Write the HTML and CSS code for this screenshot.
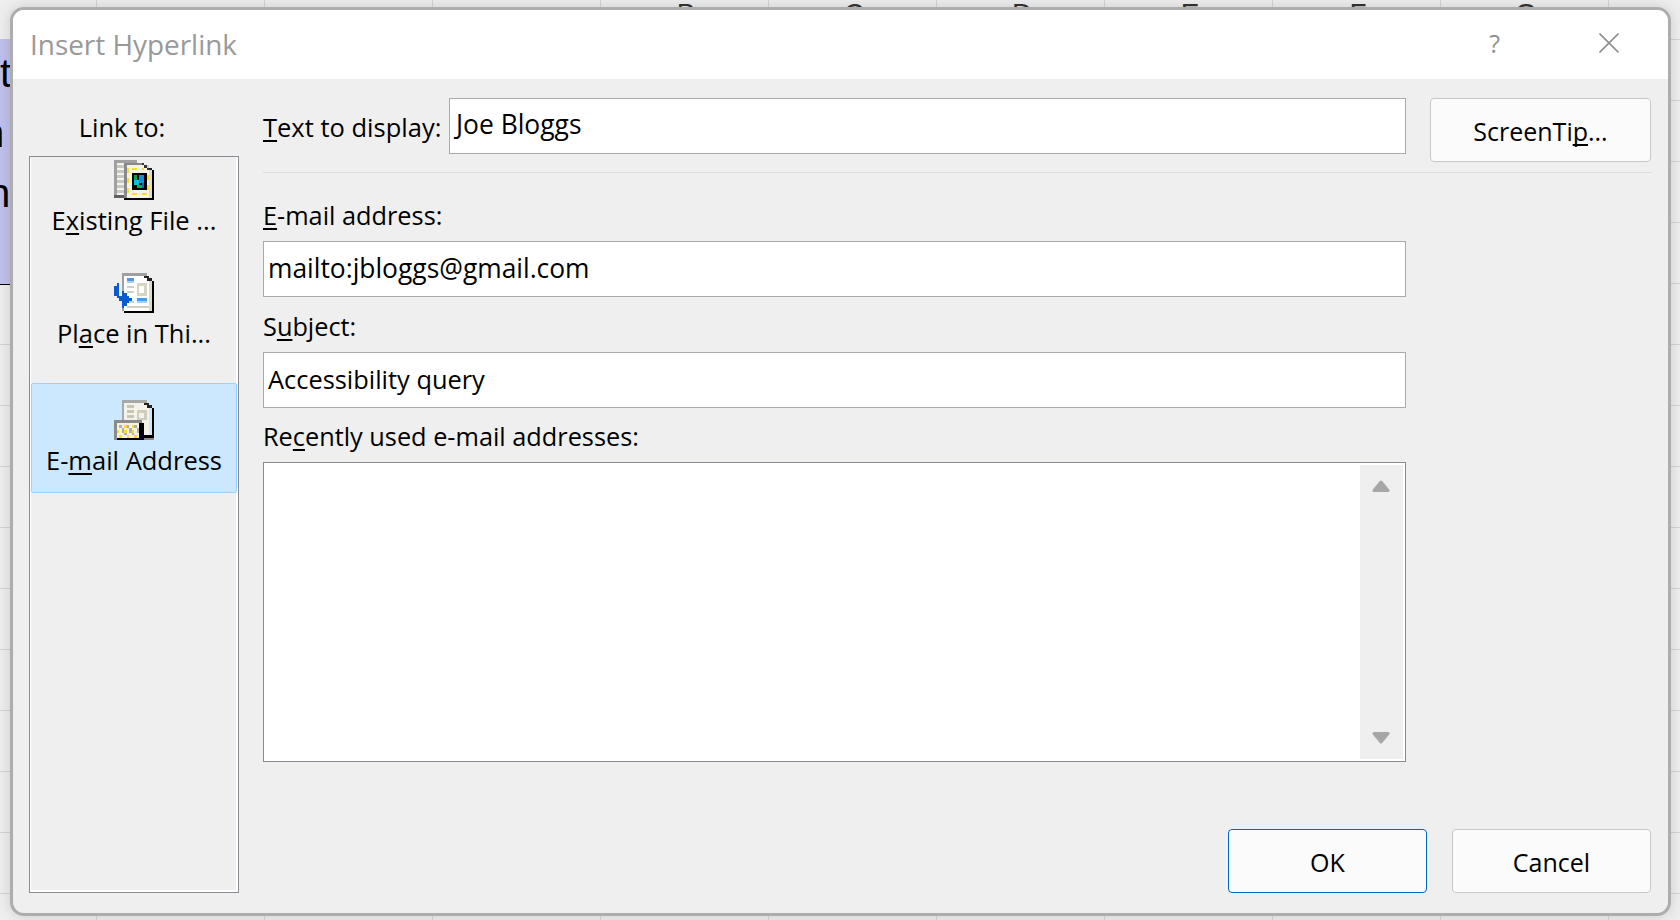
FILE: index.html
```html
<!DOCTYPE html>
<html lang="en">
<head>
<meta charset="utf-8">
<title>Insert Hyperlink</title>
<link rel="stylesheet" href="styles.css">
</head>
<body>
<div class="sheet">
  <div class="col-heads"><span>B</span><span>C</span><span>D</span><span>E</span><span>F</span><span>G</span></div>
  <div class="cell"><div class="cell-t">t</div><div class="cell-n">n</div><div class="cell-he">he</div></div>
</div>
<div class="dialog">
  <header class="titlebar">
    <span class="title">Insert Hyperlink</span>
    <span class="help">?</span>
    <svg class="close" width="20" height="20" viewBox="0 0 20 20"><path d="M0.5 0.5L19.5 19.5M19.5 0.5L0.5 19.5" stroke="#8f8f8f" stroke-width="1.6" fill="none"/></svg>
  </header>
  <div class="content">
    <aside class="side">
      <div class="side-label">Link to:</div>
      <div class="places">
        <div class="place">
          <svg class="picon" viewBox="0 0 16 16" shape-rendering="crispEdges">
            <rect x="0" y="0" width="9" height="15" fill="#a0a0a0"/>
            <rect x="1" y="1" width="7" height="13" fill="#f4f4ee"/>
            <rect x="1" y="2" width="3" height="1" fill="#c8c8c0"/><rect x="1" y="4" width="3" height="1" fill="#c8c8c0"/><rect x="1" y="6" width="3" height="1" fill="#c8c8c0"/><rect x="1" y="8" width="3" height="1" fill="#c8c8c0"/><rect x="1" y="10" width="3" height="1" fill="#c8c8c0"/><rect x="1" y="12" width="3" height="1" fill="#c8c8c0"/>
            <rect x="0" y="14" width="4" height="1" fill="#606060"/>
            <rect x="4" y="1" width="8" height="15" fill="#8a8a8a"/>
            <rect x="5" y="2" width="9" height="13" fill="#f6f3e4"/>
            <rect x="11" y="1" width="1" height="1" fill="#333"/><rect x="12" y="2" width="2" height="1" fill="#d0d0c8"/><rect x="12" y="2" width="1" height="1" fill="#333"/><rect x="13" y="3" width="1" height="1" fill="#333"/><rect x="14" y="3" width="1" height="1" fill="#222"/>
            <rect x="15" y="4" width="1" height="12" fill="#000"/><rect x="4" y="15" width="12" height="1" fill="#000"/><rect x="14" y="4" width="1" height="11" fill="#e0ddc8"/>
            <rect x="5" y="3" width="1" height="2" fill="#ffd92e"/><rect x="5" y="7" width="1" height="2" fill="#ffd92e"/><rect x="5" y="11" width="1" height="2" fill="#ffd92e"/>
            <rect x="7" y="3" width="2" height="1" fill="#ffd92e"/><rect x="11" y="3" width="1" height="1" fill="#ffd92e"/><rect x="7" y="13" width="2" height="1" fill="#ffd92e"/><rect x="11" y="13" width="2" height="1" fill="#ffd92e"/><rect x="13" y="6" width="1" height="2" fill="#ffd92e"/><rect x="13" y="10" width="1" height="2" fill="#ffd92e"/>
            <rect x="7" y="5" width="6" height="7" fill="#000"/>
            <rect x="8" y="6" width="1" height="2" fill="#00a64a"/><rect x="8" y="8" width="2" height="2" fill="#00c8d8"/><rect x="10" y="6" width="2" height="3" fill="#1590e0"/><rect x="9" y="10" width="2" height="1" fill="#00b04a"/><rect x="11" y="9" width="1" height="2" fill="#1068c8"/>
          </svg>
          <span class="place-text">E<u>x</u>isting File ...</span>
        </div>
        <div class="place">
          <svg class="picon" viewBox="0 0 16 16" shape-rendering="crispEdges">
            <rect x="3" y="0" width="10" height="15" fill="#a0a0a0"/>
            <rect x="4" y="1" width="10" height="14" fill="#fff"/>
            <rect x="12" y="1" width="2" height="1" fill="#222"/><rect x="13" y="2" width="2" height="1" fill="#222"/>
            <rect x="15" y="3" width="1" height="13" fill="#000"/><rect x="4" y="15" width="12" height="1" fill="#000"/><rect x="14" y="3" width="1" height="12" fill="#dedbc8"/>
            <rect x="5" y="2" width="3" height="1" fill="#4a9bf0"/><rect x="5" y="3" width="3" height="1" fill="#a8d0f8"/><rect x="5" y="5" width="3" height="1" fill="#d4d0c0"/><rect x="5" y="7" width="3" height="1" fill="#d4d0c0"/><rect x="5" y="11" width="3" height="1" fill="#d4d0c0"/><rect x="5" y="13" width="9" height="1" fill="#d4d0c0"/>
            <rect x="9" y="4" width="4" height="5" fill="#d8d4c4"/><rect x="10" y="5" width="2" height="3" fill="#fff"/>
            <rect x="9" y="10" width="4" height="1" fill="#4a9bf0"/><rect x="9" y="11" width="4" height="1" fill="#a8d0f8"/>
            <rect x="1" y="4" width="1" height="1" fill="#0a5ad0"/><rect x="0" y="5" width="2" height="4" fill="#0a5ad0"/><rect x="1" y="9" width="2" height="1" fill="#0a5ad0"/><rect x="2" y="10" width="2" height="1" fill="#0a5ad0"/><rect x="3" y="7" width="1" height="7" fill="#0a5ad0"/><rect x="4" y="8" width="1" height="5" fill="#0a5ad0"/><rect x="5" y="9" width="1" height="3" fill="#0a5ad0"/><rect x="6" y="10" width="1" height="1" fill="#0a5ad0"/>
          </svg>
          <span class="place-text">Pl<u>a</u>ce in Thi...</span>
        </div>
        <div class="place selected">
          <svg class="picon" viewBox="0 0 16 16" shape-rendering="crispEdges">
            <rect x="3" y="0" width="10" height="15" fill="#a8a8a8"/>
            <rect x="4" y="1" width="10" height="14" fill="#f4f3ea"/>
            <rect x="12" y="1" width="2" height="1" fill="#222"/><rect x="13" y="2" width="2" height="1" fill="#222"/>
            <rect x="15" y="3" width="1" height="11" fill="#000"/><rect x="12" y="14" width="4" height="1" fill="#000"/><rect x="12" y="15" width="4" height="1" fill="#8a8a8a"/>
            <rect x="5" y="2" width="3" height="1" fill="#c8c5b4"/><rect x="5" y="4" width="3" height="1" fill="#c8c5b4"/><rect x="5" y="6" width="3" height="1" fill="#c8c5b4"/>
            <rect x="9" y="4" width="4" height="4" fill="#d0cdbc"/><rect x="10" y="5" width="2" height="2" fill="#f4f3ea"/>
            <rect x="0" y="8" width="11" height="8" fill="#8a8a8a"/>
            <rect x="1" y="9" width="9" height="6" fill="#f6f3dc"/>
            <rect x="10" y="9" width="2" height="7" fill="#000"/><rect x="1" y="15" width="11" height="1" fill="#000"/>
            <rect x="2" y="10" width="1" height="1" fill="#b0b0b0"/><rect x="3" y="11" width="1" height="2" fill="#b0b0b0"/><rect x="5" y="10" width="1" height="1" fill="#b0b0b0"/><rect x="4" y="13" width="1" height="1" fill="#b0b0b0"/><rect x="6" y="11" width="1" height="2" fill="#b0b0b0"/><rect x="8" y="10" width="1" height="1" fill="#b0b0b0"/><rect x="7" y="13" width="1" height="1" fill="#b0b0b0"/><rect x="9" y="11" width="1" height="2" fill="#b0b0b0"/>
            <rect x="1" y="12" width="1" height="1" fill="#ffd92e"/><rect x="4" y="10" width="1" height="1" fill="#ffd92e"/><rect x="4" y="12" width="1" height="1" fill="#ffd92e"/><rect x="7" y="10" width="1" height="1" fill="#ffd92e"/><rect x="7" y="12" width="1" height="1" fill="#ffd92e"/><rect x="2" y="14" width="1" height="1" fill="#ffd92e"/><rect x="5" y="14" width="1" height="1" fill="#ffd92e"/><rect x="8" y="14" width="1" height="1" fill="#ffd92e"/>
          </svg>
          <span class="place-text">E-<u>m</u>ail Address</span>
        </div>
      </div>
    </aside>
    <main class="main">
      <div class="top-row">
        <label class="inline-label"><u>T</u>ext to display:</label>
        <div class="input input-top">Joe Bloggs</div>
        <button class="btn btn-tip" type="button">ScreenTi<u>p</u>...</button>
      </div>
      <div class="sep"></div>
      <div class="fields">
        <label class="label label-email"><u>E</u>-mail address:</label>
        <div class="input">mailto:jbloggs@gmail.com</div>
        <label class="label label-subject">S<u>u</u>bject:</label>
        <div class="input input-subject">Accessibility query</div>
        <label class="label label-recent">Re<u>c</u>ently used e-mail addresses:</label>
        <div class="list">
          <div class="list-body"></div>
          <div class="scrollbar">
            <svg width="18" height="14" viewBox="0 0 18 14"><path d="M9 3L16 11.5H2Z" fill="#a6a6a6" stroke="#a6a6a6" stroke-width="3" stroke-linejoin="round"/></svg>
            <svg width="18" height="14" viewBox="0 0 18 14"><path d="M9 11L16 2.5H2Z" fill="#a6a6a6" stroke="#a6a6a6" stroke-width="3" stroke-linejoin="round"/></svg>
          </div>
        </div>
      </div>
      <div class="footer">
        <button class="btn btn-foot btn-ok" type="button">OK</button>
        <button class="btn btn-foot" type="button">Cancel</button>
      </div>
    </main>
  </div>
</div>
</body>
</html>
```

FILE: styles.css
```css
* { box-sizing: border-box; }
html, body { margin: 0; padding: 0; }
body {
  width: 1680px;
  height: 920px;
  overflow: hidden;
  position: relative;
  background: #ececec;
  font-family: "Open Sans", "Noto Sans", sans-serif;
  color: #000;
}
.sheet {
  position: absolute;
  inset: 0;
  overflow: hidden;
  background-color: #eeeeee;
  background-image:
    linear-gradient(to right, #d4d4d4 1px, transparent 1px),
    linear-gradient(to bottom, #d4d4d4 1px, transparent 1px);
  background-size: 168px 100%, 100% 61px;
  background-position: 96px 0, 0 39px;
}
.col-heads {
  display: flex;
  height: 7px;
  padding-left: 602px;
  overflow: hidden;
  font-family: "Liberation Sans", sans-serif;
  font-size: 28px;
  line-height: 28px;
  color: #333;
}
.col-heads span { width: 168px; text-align: center; }
.cell {
  position: absolute;
  left: 0;
  top: 39px;
  width: 14px;
  height: 246px;
  background: #c0c0ee;
  border-bottom: 1px solid #000;
  overflow: hidden;
  font-family: "Liberation Sans", sans-serif;
  font-size: 40px;
  line-height: 60px;
  white-space: nowrap;
}
.cell-t { margin-top: 4px; }
.cell-n { text-indent: -18px; }
.cell-he { text-indent: -12px; }

.dialog {
  position: absolute;
  left: 10px;
  top: 7px;
  width: 1661px;
  height: 909px;
  display: flex;
  flex-direction: column;
  border: 3px solid #adadad;
  border-radius: 14px;
  background: #efefef;
  overflow: hidden;
  box-shadow: 0 0 14px rgba(0, 0, 0, 0.14);
}
.titlebar {
  flex: none;
  height: 69px;
  display: flex;
  align-items: center;
  padding: 0 49px 0 17px;
  background: #fff;
}
.title { font-size: 27.9px; color: #999; flex: 1; margin-bottom: 2px; }
.help { font-size: 25px; color: #8f8f8f; margin-right: 99px; margin-bottom: 4px; }
.close { display: block; margin-bottom: 4px; }

.content { flex: 1; display: flex; min-height: 0; padding-left: 16px; }
.side { flex: none; width: 210px; display: flex; flex-direction: column; }
.side-label {
  flex: none;
  height: 77px;
  padding: 30px 24px 0 0;
  text-align: center;
  font-size: 25.5px;
  line-height: 36px;
}
.places {
  flex: none;
  height: 737px;
  border: 1px solid #8a8a93;
  box-shadow: inset 1px 0 0 #fff, inset -2px 0 0 #fff, inset 0 -2px 0 #fff;
  padding: 0 1px;
  display: flex;
  flex-direction: column;
  overflow: hidden;
}
.place {
  flex: none;
  height: 113px;
  padding-top: 3px;
  display: flex;
  flex-direction: column;
  align-items: center;
  font-size: 25.5px;
  line-height: 36px;
  white-space: nowrap;
}
.picon { display: block; width: 40px; height: 40px; flex: none; }
.place-text { display: block; margin-top: 2px; }
.place.selected {
  height: 110px;
  padding-top: 16px;
  background: #cce8ff;
  border: 1px solid #99d1ff;
  border-radius: 2px;
}
.main {
  flex: 1;
  margin-left: 24px;
  margin-right: 16px;
  display: flex;
  flex-direction: column;
  min-width: 0;
  padding: 19px 0 20px;
}
.top-row { flex: none; display: flex; align-items: flex-start; height: 74px; }
.inline-label { flex: none; width: 186px; font-size: 25.5px; line-height: 36px; margin-top: 11px; }
.input {
  height: 56px;
  border: 1px solid #a9a9b0;
  background: #fff;
  font-size: 26.4px;
  line-height: 52px;
  padding: 0 4px;
  white-space: nowrap;
}
.input-top { flex: none; width: 957px; line-height: 50px; padding-left: 6px; }
.input-subject { font-size: 25.4px; }
.btn {
  font-family: inherit;
  color: #000;
  background: #fbfbfb;
  border: 1px solid #c4c8cc;
  border-radius: 4px;
  font-size: 25px;
  padding: 2px 0 0;
}
.btn-tip { flex: none; width: 221px; height: 64px; margin-left: 24px; }
.sep { flex: none; height: 1px; background: #dcdcdc; }
.fields { flex: none; width: 1143px; display: flex; flex-direction: column; }
.label { display: block; font-size: 25.3px; line-height: 36px; padding-bottom: 8px; }
.label-email { padding-top: 24px; }
.label-subject { padding-top: 11px; }
.label-recent { padding-top: 10px; }
.list {
  flex: none;
  height: 300px;
  border: 1px solid #8a8a93;
  background: #fff;
  padding: 2px;
  display: flex;
}
.list-body { flex: 1; }
.scrollbar {
  flex: none;
  width: 43px;
  background: #efefef;
  display: flex;
  flex-direction: column;
  justify-content: space-between;
  align-items: center;
  padding: 14px 2px 14px 0;
}
.scrollbar svg { display: block; }
.footer { margin-top: auto; display: flex; justify-content: flex-end; gap: 25px; padding-right: 1px; }
.btn-foot { width: 199px; height: 64px; }
.btn-ok { border-color: #0067c0; }
u { text-underline-offset: 3px; text-decoration-thickness: 2px; text-decoration-skip-ink: none; }
```
